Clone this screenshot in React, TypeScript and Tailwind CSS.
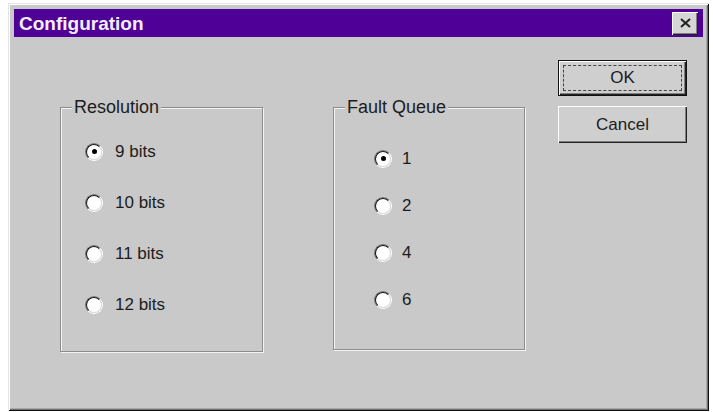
import React from 'react';

interface GroupProps {
  title: string;
  options: string[];
  selected: number;
  className: string;
  listClassName: string;
  rowClassName: string;
  gapClassName: string;
}

// Classic sunken radio button: dark arcs top-left, light arcs bottom-right
const Radio: React.FC<{ checked: boolean }> = ({ checked }) => (
  <div className="w-[18px] h-[18px] rounded-full border border-t-[#7a7a7a] border-l-[#7a7a7a] border-b-white border-r-white">
    <div className="w-full h-full rounded-full border border-t-[#141414] border-l-[#141414] border-b-[#dcdcdc] border-r-[#dcdcdc] bg-white flex items-center justify-center">
      {checked && <div className="w-[5px] h-[5px] rounded-full bg-black" />}
    </div>
  </div>
);

const GroupBox: React.FC<GroupProps> = ({ title, options, selected, className, listClassName, rowClassName, gapClassName }) => (
  <div className={`relative border border-[#8c8c8c] shadow-[1px_1px_0_#f4f4f4,inset_1px_1px_0_#f4f4f4] ${className}`}>
    <span className="absolute left-[11px] top-[-11px] px-[2px] bg-[#c9c9c9] leading-[20px] text-[18px] text-[#1c1c1c]">
      {title}
    </span>
    <div className={`flex flex-col ${listClassName}`}>
      {options.map((opt, i) => (
        <div key={opt} className={`flex items-center ${rowClassName}`}>
          <Radio checked={i === selected} />
          <span className={`text-[17px] text-[#1c1c1c] ${gapClassName}`}>{opt}</span>
        </div>
      ))}
    </div>
  </div>
);

export default function App() {
  return (
    <div className="w-[713px] h-[412px] bg-white pt-[3px] pl-[8px] font-['Liberation_Sans',Arial,sans-serif]">
      <div className="w-[701px] h-[408px] bg-[#c9c9c9] p-[6px] flex flex-col shadow-[inset_1px_1px_0_#e4e4e4,inset_-1px_-1px_0_#111,inset_2px_2px_0_#fff,inset_-2px_-2px_0_#6e6e6e,inset_-3px_-3px_0_#a8a8a8]">
        {/* Title bar */}
        <div className="h-[28px] bg-[#4f0096] flex items-center pl-[5px] pr-[5px]">
          <span className="text-[19px] font-bold text-[#f2eefa] leading-none">Configuration</span>
          <div className="ml-auto w-[26px] h-[23px] bg-[#d6d6d6] flex items-center justify-center shadow-[inset_1px_1px_0_#fff,inset_-1px_-1px_0_#222,inset_-2px_-2px_0_#808080]">
            <svg width="11" height="10" viewBox="0 0 11 10">
              <path d="M1 1 L10 9 M10 1 L1 9" stroke="#222" strokeWidth="2" />
            </svg>
          </div>
        </div>

        {/* Body */}
        <div className="flex items-start pl-[46px]">
          <GroupBox
            title="Resolution"
            options={['9 bits', '10 bits', '11 bits', '12 bits']}
            selected={0}
            className="mt-[70px] w-[203px] h-[245px]"
            listClassName="pt-[18px] pl-[24px]"
            rowClassName="h-[51px]"
            gapClassName="ml-[12px]"
          />
          <GroupBox
            title="Fault Queue"
            options={['1', '2', '4', '6']}
            selected={0}
            className="ml-[70px] mt-[70px] w-[192px] h-[243px]"
            listClassName="pt-[27px] pl-[40px]"
            rowClassName="h-[47px]"
            gapClassName="ml-[10px]"
          />

          <div className="ml-[33px] mt-[23px] flex flex-col gap-[10px]">
            <button className="w-[129px] h-[36px] border border-[#111] bg-[#cfcfcf] p-0 shadow-[inset_1px_1px_0_#fff,inset_-1px_-1px_0_#222,inset_-2px_-2px_0_#808080]">
              <div className="m-[4px] h-[26px] border border-dashed border-[#444] flex items-center justify-center text-[17px] text-[#1c1c1c]">
                OK
              </div>
            </button>
            <button className="w-[129px] h-[37px] bg-[#cfcfcf] flex items-center justify-center text-[17px] text-[#1c1c1c] shadow-[inset_1px_1px_0_#fff,inset_-1px_-1px_0_#222,inset_-2px_-2px_0_#808080]">
              Cancel
            </button>
          </div>
        </div>
      </div>
    </div>
  );
}
